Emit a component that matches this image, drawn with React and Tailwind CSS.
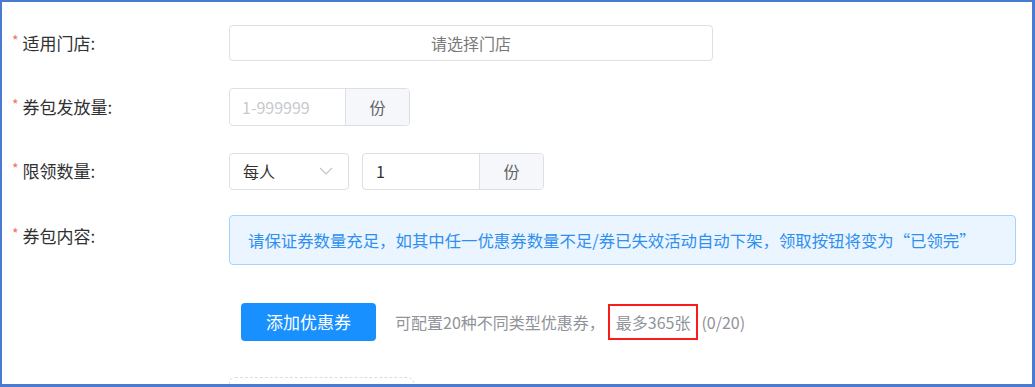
import React from "react";

function Label({ text }) {
  return (
    <div className="w-[227px] shrink-0 flex items-center pl-[10px] h-[40px] text-[17px] text-[#303133]">
      <span className="text-[#f56c6c] text-[14px] mr-[4px] -mt-[6px]">*</span>
      <span>{text}</span>
    </div>
  );
}

function Addon({ width }) {
  return (
    <div
      className={`${width} h-full bg-[#f5f7fa] border-l border-[#dcdfe6] flex items-center justify-center text-[16px] text-[#606266]`}
    >
      份
    </div>
  );
}

export default function App() {
  return (
    <div
      className="w-[1035px] h-[387px] overflow-hidden bg-white border-t-2 border-l-2 border-r-[3px] border-b-[3px] border-[#4a7bd0]"
      style={{ fontFamily: '"Noto Sans CJK SC", "Noto Sans", sans-serif' }}
    >
      <div className="pt-[23px]">
        {/* 适用门店 */}
        <div className="flex items-center h-[36px]">
          <Label text="适用门店:" />
          <div className="w-[484px] h-[36px] border border-[#dcdfe6] rounded-[4px] flex items-center justify-center text-[16px] text-[#7a7a7a]">
            请选择门店
          </div>
        </div>

        {/* 券包发放量 */}
        <div className="flex items-center h-[38px] mt-[27px]">
          <Label text="券包发放量:" />
          <div className="w-[181px] h-[38px] border border-[#dcdfe6] rounded-[4px] flex overflow-hidden">
            <div className="w-[116px] flex items-center pl-[12px] text-[16px] text-[#c8cacf]">1-999999</div>
            <Addon width="w-[65px]" />
          </div>
        </div>

        {/* 限领数量 */}
        <div className="flex items-center h-[38px] mt-[26px]">
          <Label text="限领数量:" />
          <div className="w-[120px] h-[37px] border border-[#dcdfe6] rounded-[4px] flex items-center justify-between pl-[13px] pr-[15px] text-[16px] text-[#303133]">
            <span>每人</span>
            <svg width="14" height="8" viewBox="0 0 14 8" fill="none">
              <path d="M1 1l6 6 6-6" stroke="#c0c4cc" strokeWidth="1.2" />
            </svg>
          </div>
          <div className="ml-[13px] w-[182px] h-[37px] border border-[#dcdfe6] rounded-[4px] flex overflow-hidden">
            <div className="w-[117px] flex items-center pl-[13px] text-[16px] text-[#303133]">1</div>
            <Addon width="w-[65px]" />
          </div>
        </div>

        {/* 券包内容 */}
        <div className="flex items-start mt-[25px]">
          <div className="pt-[1px]">
            <Label text="券包内容:" />
          </div>
          <div className="w-[787px] h-[50px] bg-[#ebf5ff] border border-[#a6d2fb] rounded-[4px] flex items-center pl-[18px] text-[16.4px] text-[#2f8ff0]">
            请保证券数量充足，如其中任一优惠券数量不足/券已失效活动自动下架，领取按钮将变为“已领完”
          </div>
        </div>

        <div className="flex items-center mt-[38px] pl-[239px]">
          <button className="w-[135px] h-[38px] bg-[#1890ff] rounded-[4px] text-white text-[17px]">
            添加优惠券
          </button>
          <div className="ml-[19px] flex items-center text-[16px] text-[#909399]">
            <span>可配置20种不同类型优惠券，</span>
            <span className="ml-[3px] border-2 border-[#ff1a1a] h-[36px] px-[6px] flex items-center">最多365张</span>
            <span className="ml-[3px]">(0/20)</span>
          </div>
        </div>

        <div className="ml-[227px] mt-[36px] w-[185px] h-[40px] border border-dashed border-[#d9dce2] rounded-[6px]" />
      </div>
    </div>
  );
}
